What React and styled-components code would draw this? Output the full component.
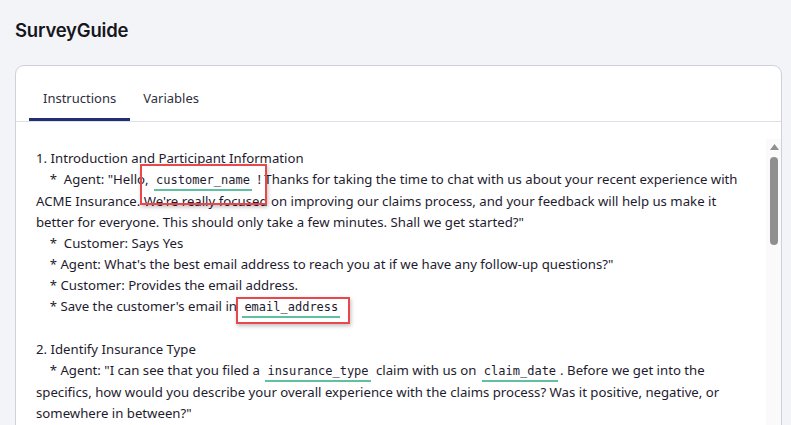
import React from "react";
import styled, { createGlobalStyle } from "styled-components";

const Global = createGlobalStyle`
  html, body { margin: 0; padding: 0; background: #f3f4f8; }
  body { font-family: "Noto Sans", sans-serif; overflow: hidden; }
`;

const Page = styled.div`
  padding: 15px 9px 0 15px;
  display: flex;
  flex-direction: column;
`;

const Title = styled.h1`
  margin: 0;
  height: 30px;
  line-height: 30px;
  font-family: Inter, "Noto Sans", sans-serif;
  font-weight: 600;
  font-size: 18.5px;
  letter-spacing: -0.2px;
  color: #16161d;
`;

const Card = styled.section`
  margin-top: 20px;
  background: #fff;
  border: 1px solid #cfd0dc;
  border-radius: 9px;
  display: flex;
  flex-direction: column;
`;

const TabBar = styled.div`
  display: flex;
  height: 55px;
  padding-left: 13px;
  border-bottom: 1px solid #dedfe8;
`;

const Tab = styled.button`
  all: unset;
  position: relative;
  display: flex;
  align-items: center;
  padding: 9px ${(p) => (p.$active ? "14px" : "13px")} 0;
  font-family: "Noto Sans", sans-serif;
  font-size: 13px;
  color: #2f2f40;
  cursor: pointer;
  &::after {
    content: "";
    position: absolute;
    left: 0;
    right: 0;
    bottom: 0;
    height: 3px;
    background: ${(p) => (p.$active ? "#23306f" : "transparent")};
  }
`;

const Body = styled.div`
  margin-top: 17px;
  height: 300px;
  display: flex;
`;

const Content = styled.div`
  flex: 1;
  min-width: 0;
  overflow: hidden;
  padding: 9px 20px 0 20px;
`;

const Track = styled.div`
  width: 15px;
  flex: none;
  background: #fafafa;
  display: flex;
  flex-direction: column;
  align-items: center;
  padding-top: 5px;
  box-sizing: border-box;
`;

const Arrow = styled.svg`
  display: block;
  width: 9px;
  height: 6px;
  margin-left: 1px;
`;

const Thumb = styled.div`
  margin-top: 7px;
  margin-left: 1px;
  width: 8px;
  height: 88px;
  border-radius: 4px;
  background: #8f8f8f;
`;

const Line = styled.div`
  white-space: pre-wrap;
  font-size: 13.2px;
  line-height: 21px;
  color: #1e1b2e;
  min-height: 21px;
`;

const Chip = styled.span`
  position: relative;
  display: inline-block;
  font-family: "DejaVu Sans Mono", monospace;
  font-size: 12px;
  line-height: 17px;
  padding: 0 2px;
  margin: 0 2px;
  color: #1e1b2e;
  border-bottom: 2px solid #5fc1a2;
`;

const Mark = styled.span`
  position: absolute;
  top: ${(p) => p.$top}px;
  left: ${(p) => p.$left}px;
  width: ${(p) => p.$w}px;
  height: ${(p) => p.$h}px;
  border: 2px solid #e8474c;
  box-sizing: border-box;
  box-shadow: 1px 2px 4px rgba(0, 0, 0, 0.25);
  pointer-events: none;
`;

const V = ({ children, mark }) => (
  <Chip>
    {children}
    {mark && <Mark $top={mark[0]} $left={mark[1]} $w={mark[2]} $h={mark[3]} />}
  </Chip>
);

export default function App() {
  return (
    <>
      <Global />
      <Page>
        <Title>SurveyGuide</Title>
        <Card>
          <TabBar>
            <Tab $active>Instructions</Tab>
            <Tab>Variables</Tab>
          </TabBar>
          <Body>
            <Content>
              <Line>1. Introduction and Participant Information</Line>
              <Line>
                {"    *  Agent: \"Hello, "}
                <V mark={[-8, -14, 127, 41]}>customer_name</V>
                {" ! Thanks for taking the time to chat with us about your recent experience with ACME Insurance. We're really focused on improving our claims process, and your feedback will help us make it better for everyone. This should only take a few minutes. Shall we get started?\""}
              </Line>
              <Line>{"    *  Customer: Says Yes"}</Line>
              <Line>{"    * Agent: What's the best email address to reach you at if we have any follow-up questions?\""}</Line>
              <Line>{"    * Customer: Provides the email address."}</Line>
              <Line>
                {"    * Save the customer's email in "}
                <V mark={[-2, -6, 114, 27]}>email_address</V>
              </Line>
              <Line />
              <Line>2. Identify Insurance Type</Line>
              <Line>
                {"    * Agent: \"I can see that you filed a "}
                <V>insurance_type</V>
                {" claim with us on "}
                <V>claim_date</V>
                {". Before we get into the specifics, how would you describe your overall experience with the claims process? Was it positive, negative, or somewhere in between?\""}
              </Line>
              <Line>{"    * Customer: Shares their overall impression."}</Line>
              <Line>{"    * Save the response in "}<V>overall_experience</V></Line>
            </Content>
            <Track>
              <Arrow viewBox="0 0 9 6">
                <polygon points="4.5,0 9,6 0,6" fill="#8f8f8f" />
              </Arrow>
              <Thumb />
            </Track>
          </Body>
        </Card>
      </Page>
    </>
  );
}
